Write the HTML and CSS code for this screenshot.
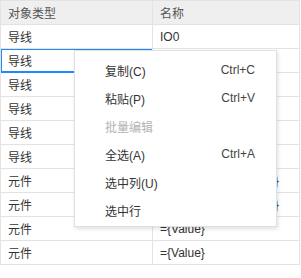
FILE: index.html
```html
<!DOCTYPE html>
<html>
<head>
<meta charset="utf-8">
<link rel="stylesheet" href="styles.css">
</head>
<body>
<div class="page">
  <div class="grid">
    <div class="cell head">对象类型</div><div class="cell head">名称</div>
    <div class="cell">导线</div><div class="cell">IO0</div>
    <div class="cell selected">导线</div><div class="cell">IO1</div>
    <div class="cell">导线</div><div class="cell">IO2</div>
    <div class="cell">导线</div><div class="cell">IO3</div>
    <div class="cell">导线</div><div class="cell">IO4</div>
    <div class="cell">导线</div><div class="cell">IO5</div>
    <div class="cell">元件</div><div class="cell">={Value}+" = "+{Value}</div>
    <div class="cell">元件</div><div class="cell">={Value}+" = "+{Value}</div>
    <div class="cell">元件</div><div class="cell">={Value}</div>
    <div class="cell">元件</div><div class="cell">={Value}</div>
  </div>
  <div class="menu">
    <div class="item"><span>复制(C)</span><span class="key">Ctrl+C</span></div>
    <div class="item"><span>粘贴(P)</span><span class="key">Ctrl+V</span></div>
    <div class="item disabled"><span>批量编辑</span></div>
    <div class="item"><span>全选(A)</span><span class="key">Ctrl+A</span></div>
    <div class="item"><span>选中列(U)</span></div>
    <div class="item"><span>选中行</span></div>
  </div>
</div>
</body>
</html>
```
FILE: styles.css
```css
html, body { margin: 0; padding: 0; background: #fff; }
body {
  font-family: "Liberation Sans", "Noto Sans CJK SC", sans-serif;
  font-size: 12px;
  color: #333;
}
.page { position: relative; width: 301px; height: 278px; overflow: hidden; }
.grid {
  display: grid;
  grid-template-columns: 152px 147px;
  grid-auto-rows: 24px;
  width: 300px;
  border-left: 1px solid #e3e3e3;
  border-top: 1px solid #e3e3e3;
  box-sizing: border-box;
}
.cell {
  border-right: 1px solid #e3e3e3;
  border-bottom: 1px solid #e3e3e3;
  padding-left: 7px;
  display: flex;
  align-items: center;
  white-space: pre;
  overflow: hidden;
  box-sizing: border-box;
}
.head { background: #efefef; color: #555; }
.selected { box-shadow: inset 0 0 0 1px #1a8cff; border-bottom-color: #1a8cff; }
.menu {
  position: absolute;
  left: 74px;
  top: 50px;
  width: 203px;
  padding: 5px 0 2px;
  box-sizing: border-box;
  background: #fff;
  border: 1px solid #e0e0e0;
  box-shadow: 1px 2px 4px rgba(0,0,0,0.12);
}
.item {
  height: 28px;
  display: flex;
  align-items: center;
  justify-content: space-between;
  padding: 0 21px 0 30px;
  color: #333;
}
.key { color: #444; }
.disabled { color: #b4b4b4; }
```
